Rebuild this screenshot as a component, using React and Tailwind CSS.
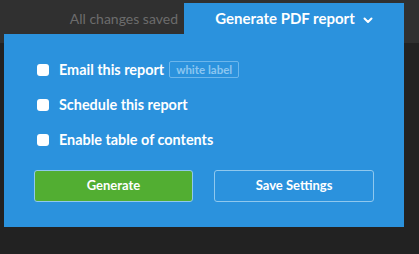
export default function App() {
  const options = [
    { label: 'Email this report', badge: 'white label' },
    { label: 'Schedule this report' },
    { label: 'Enable table of contents' },
  ];

  return (
    <div className="w-[419px] h-[254px] bg-[linear-gradient(#303030_43px,#222222_43px)] pt-[3px] font-['Lato',sans-serif] overflow-hidden">
      {/* Top bar */}
      <div className="flex items-center justify-end pr-[15px] h-[31px]">
        <span className="text-[14px] text-[#6c6c6c] mr-[6px]">All changes saved</span>
        <div className="w-[220px] h-full bg-[#2b92dd] flex items-center justify-center gap-[8px] pb-[1px] text-white font-bold text-[15px]">
          <span>Generate PDF report</span>
          <svg className="w-[10px] h-[10px] mt-[3px]" viewBox="0 0 10 10" fill="none" stroke="currentColor" strokeWidth={2} strokeLinecap="round" strokeLinejoin="round">
            <path d="M1.5 3.5 5 7l3.5-3.5" />
          </svg>
        </div>
      </div>

      {/* Panel */}
      <div className="ml-[4px] w-[400px] h-[193px] bg-[#2b92dd] pl-[30px] pr-[30px] pt-[27px]">
        <div className="flex flex-col gap-[18px] pl-[3px]">
          {options.map((o) => (
            <label key={o.label} className="flex items-center h-[17px] text-white font-bold text-[14.4px]">
              <span className="w-[12px] h-[12px] bg-white rounded-[3px] mr-[10px]" />
              <span>{o.label}</span>
              {o.badge && (
                <span className="ml-[5px] h-[17px] px-[6px] flex items-center border border-[#6cb6ec] rounded-[2px] text-[11.5px] text-[#8cc6f0] font-bold">
                  {o.badge}
                </span>
              )}
            </label>
          ))}
        </div>
        <div className="flex gap-[21px] mt-[22px]">
          <button className="w-[159px] h-[32px] bg-[#52ae32] border border-[#8fc8ee] rounded-[3px] text-white font-bold text-[13px]">
            Generate
          </button>
          <button className="w-[160px] h-[32px] border border-[#8fc8ee] rounded-[3px] text-white font-bold text-[13px]">
            Save Settings
          </button>
        </div>
      </div>
    </div>
  );
}
